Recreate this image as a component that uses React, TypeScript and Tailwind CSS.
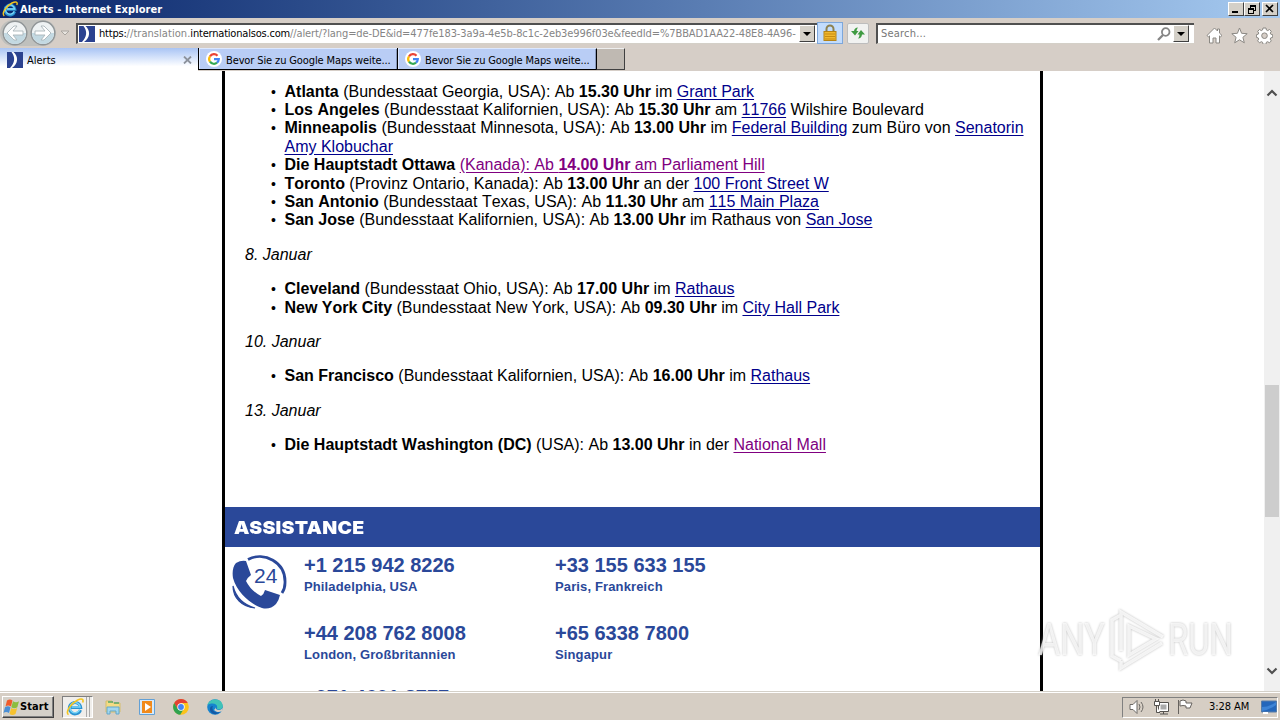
import type { ReactNode } from "react";

const tahoma = "font-['DejaVu_Sans_Condensed','DejaVu_Sans',sans-serif] font-stretch-condensed";
const raised = "border border-t-white border-l-white border-r-[#404040] border-b-[#404040] bg-[#d4d0c8]";

function IeIcon({ size = 16 }: { size?: number }) {
  return (
    <svg width={size} height={size} viewBox="0 0 16 16" fill="none" className="shrink-0">
      <path d="M12.8 10.6A5 5 0 1 1 13 8.4H4.5" stroke="#2b93d1" strokeWidth="2.8" />
      <path d="M12.3 10.3A4.6 4.6 0 1 1 12.6 8H5" stroke="#7bd6f8" strokeWidth="1.3" />
      <path d="M2.3 14.8C-1 13 4 5 10 2c4-2 6-1 4.8 2" stroke="#f4c61f" strokeWidth="1.4" />
    </svg>
  );
}

function SosIcon() {
  return (
    <svg width="16" height="16" viewBox="0 0 16 16" className="shrink-0">
      <rect width="16" height="16" fill="#2b4290" />
      <path d="M4.5 0H6.500c5 4.500 5 11.500-1.500 16H3C8 11 8.500 5 4.500 0Z" fill="#fff" />
    </svg>
  );
}

function GoogleIcon() {
  return (
    <svg width="16" height="16" viewBox="0 0 16 16" fill="none" className="shrink-0">
      <circle cx="8" cy="8" r="8" fill="#fff" />
      <g strokeWidth="2.2">
        <path d="M4 5.3A4.8 4.8 0 0 1 11.5 4.7" stroke="#ea4335" />
        <path d="M4 5.3a4.8 4.8 0 0 0 0 5.4" stroke="#fbbc05" />
        <path d="M4 10.7a4.8 4.8 0 0 0 7 1" stroke="#34a853" />
        <path d="M11 11.7A4.8 4.8 0 0 0 12.8 8.2H8" stroke="#4285f4" />
      </g>
    </svg>
  );
}

function NavButton({ flip }: { flip?: boolean }) {
  return (
    <svg width="26" height="26" viewBox="0 0 26 26" className={flip ? "-scale-x-100" : ""}>
      <circle cx="13" cy="13" r="11.8" fill="#eef2f3" stroke="#8f9496" strokeWidth="1.4" />
      <path d="M2 13a11 11 0 0 0 22 0Z" fill="#c3d9e2" />
      <path d="M5 13l7-7h3l-4 5h10v4H11l4 5h-3Z" fill="#fff" stroke="#aab5ba" strokeWidth="0.9" />
    </svg>
  );
}

function DropButton() {
  return (
    <div className={`flex h-[17px] w-4 items-center justify-center ${raised}`}>
      <svg width="8" height="4" viewBox="0 0 8 4">
        <path d="M0 0h8L4 4Z" />
      </svg>
    </div>
  );
}

function WindowButton({ children }: { children: ReactNode }) {
  return (
    <div className={`h-3.5 w-4 ${raised}`}>
      <svg width="14" height="12" viewBox="0 0 14 12" fill="none" stroke="#000" shapeRendering="crispEdges">
        {children}
      </svg>
    </div>
  );
}

function TitleBar() {
  return (
    <div className="flex h-[18px] items-center bg-linear-to-r from-[#0a246a] to-[#a6caf0] pr-0.5 pl-0.5">
      <IeIcon />
      <span className={`${tahoma} mt-0.5 ml-0.5 text-[11px] font-bold tracking-[0.08px] whitespace-nowrap text-white`}>
        Alerts - Internet Explorer
      </span>
      <div className="ml-auto flex">
        <WindowButton>
          <path d="M3 9h6" strokeWidth="2" />
        </WindowButton>
        <WindowButton>
          <path d="M5 2h6M5 3h6M10.5 3v4H9M5.5 2v3M3 5h6M3 6h6M3.5 5v5h5V5" />
        </WindowButton>
        <div className="w-0.5" />
        <WindowButton>
          <path d="M3 2l7 7M10 2L3 9" strokeWidth="1.7" shapeRendering="auto" />
        </WindowButton>
      </div>
    </div>
  );
}

function LockIcon() {
  return (
    <svg width="16" height="18" viewBox="0 0 16 18" fill="none">
      <path d="M4.5 8V5a3.5 3.5 0 0 1 7 0v3" stroke="#8d8150" strokeWidth="2" />
      <rect x="2" y="7.5" width="12" height="9" fill="#f0b82e" stroke="#b48317" />
      <path d="M3 10h10M3 12.5h10M3 15h10" stroke="#c78b12" />
    </svg>
  );
}

function AddressRow() {
  return (
    <div className="flex h-[30px] items-center">
      <div className="flex h-[26px] w-14 gap-0.5 rounded-full bg-[#bfc0bd] pl-0.5">
        <NavButton />
        <NavButton flip />
      </div>
      <svg width="10" height="6" viewBox="0 0 10 6" className="ml-1 shrink-0">
        <path d="M1 1h8L5 5Z" fill="#e8e5e0" stroke="#aaa6a0" />
      </svg>
      <div className="ml-1.5 flex h-[21px] w-[741px] items-center border-t-2 border-l-2 border-b border-t-[#505050] border-l-[#505050] border-b-[#d4d0c8] bg-white pr-0.5 pl-px">
        <SosIcon />
        <span className={`${tahoma} mt-0.5 ml-1 w-[699px] text-[11px] whitespace-nowrap text-[#858585]`}>
          <span className="tracking-[-0.2px] text-black">https:</span>
          <span className="tracking-[0.05px]">//translation.</span>
          <span className="tracking-[-0.2px] text-black">internationalsos.com</span>
          <span className="tracking-[-0.1px]">//alert/?lang=de-DE&amp;id=477fe183-3a9a-4e5b-8c1c-2eb3e996f03e&amp;feedId=%7BBAD1AA22-48E8-4A96-</span>
        </span>
        <div className="ml-auto"><DropButton /></div>
      </div>
      <div className="flex h-[22px] w-[26px] items-center justify-center border border-[#7da7db] bg-[#c2dcfd]">
        <LockIcon />
      </div>
      <div className="ml-1 flex h-[21px] w-[22px] items-center justify-center rounded-xs border border-[#bdbdbd] bg-[#f1f2f1]">
        <svg width="16" height="14" viewBox="0 0 16 14" fill="#3f9b42">
          <path d="M8 1.500Q4.500 1.500 4 5H1l4 4.500L8.500 5H6.500Q6.500 3 8 1.500Z" />
          <path d="M8 12.500q3.500 0 4-4h3L11 4 7.500 8.500h2q0 2.500-1.500 4Z" />
        </svg>
      </div>
      <div className="ml-[7px] flex h-[21px] w-[318px] items-center border-t-2 border-l-2 border-b border-t-[#505050] border-l-[#505050] border-b-[#d4d0c8] bg-white pr-[5px]">
        <span className={`${tahoma} mt-0.5 ml-[3px] text-[11px] tracking-[0.2px] text-[#777]`}>Search...</span>
        <svg width="14" height="14" viewBox="0 0 14 14" fill="none" stroke="#858585" strokeWidth="1.8" className="mr-0.5 ml-auto">
          <circle cx="8.7" cy="5" r="3.8" />
          <path d="M6 8l-5 5" strokeWidth="2.3" />
        </svg>
        <DropButton />
      </div>
      <div className="mt-1 ml-auto flex gap-2 pr-[7px]">
        <svg width="17" height="17" viewBox="0 0 17 17" fill="#fff" stroke="#8b8883">
          <path d="M8.5 1L1 8.5l1.5 1.3 1-.9V16H7v-5h3v5h3.5V8.9l1 .9L16 8.5l-2.500-2.400V2h-2v2Z" />
        </svg>
        <svg width="17" height="17" viewBox="0 0 17 17" fill="#fff" stroke="#8b8883">
          <path d="M8.5 1l2.1 5.3 5.6.4-4.3 3.6 1.4 5.5-4.8-3-4.8 3 1.4-5.5L.8 6.7l5.6-.4Z" />
        </svg>
        <svg width="17" height="17" viewBox="0 0 17 17" fill="#fff" stroke="#8b8883">
          <path d="M7 1h3l.4 2 1.3.6L13.5 2.5l1.8 1.8-1 1.8.5 1.1 1.9.5v2.7l-2 .5-.5 1.2 1.1 1.8-1.9 1.9-1.7-1.1-1.3.5-.4 2H7l-.5-2-1.2-.5-1.8 1.1-1.9-1.9 1.1-1.8-.5-1.2-1.8-.5V7.7l1.8-.5.5-1.1-1-1.8 1.8-1.8 1.8 1.1L6.5 3Z" />
          <circle cx="8.5" cy="8.7" r="2.8" fill="#d6cec7" />
        </svg>
      </div>
    </div>
  );
}

function Tabs() {
  return (
    <div className={`${tahoma} flex h-[23px] text-[11px] whitespace-nowrap`}>
      <div className="flex w-[198px] items-center bg-linear-to-b from-[#a9c4f4] to-white to-80% pr-1.5 pl-[7px]">
        <SosIcon />
        <span className="mt-[3px] ml-1">Alerts</span>
        <svg width="9" height="8" viewBox="0 0 9 8" className="ml-auto" stroke="#8c929c" strokeWidth="1.8">
          <path d="M1 .5l7 7M8 .5l-7 7" />
        </svg>
      </div>
      {[0, 1].map((n) => (
        <div key={n} className="flex h-[22px] w-[199px] items-center border-b border-l border-black bg-[#b9cdf5] pl-[7px] shadow-[inset_1px_1px_0_#dce8ff,inset_-1px_0_0_#8798ba]">
          <GoogleIcon />
          <span className="mt-[5px] ml-1 tracking-[-0.12px]">Bevor Sie zu Google Maps weite...</span>
        </div>
      ))}
      <div className="h-[22px] w-[29px] border border-t-[#eee] border-r-[#404040] border-b-[#404040] border-l-black bg-[#bfb9b2]" />
    </div>
  );
}

function A({ children, visited }: { children: ReactNode; visited?: boolean }) {
  return (
    <span className={`underline underline-offset-2 ${visited ? "text-[#800080]" : "text-[#00008b]"}`}>
      {children}
    </span>
  );
}

function Item({ children }: { children: ReactNode }) {
  return (
    <li className="flex">
      <span className="w-[13.5px] shrink-0 text-[14px]">•</span>
      <span>{children}</span>
    </li>
  );
}

function Events() {
  return (
    <div className="h-[436px] pt-[11.6px] pr-2 pl-5 text-[16px] leading-[18.4px] text-black [font-kerning:none]">
      <ul className="mb-4 pl-[26px]">
        <Item><b>Atlanta</b> (Bundesstaat Georgia, USA): Ab <b>15.30 Uhr</b> im <A>Grant Park</A></Item>
        <Item><b>Los Angeles</b> (Bundesstaat Kalifornien, USA): Ab <b>15.30 Uhr</b> am <A>11766</A> Wilshire Boulevard</Item>
        <Item><b>Minneapolis</b> (Bundesstaat Minnesota, USA): Ab <b>13.00 Uhr</b> im <A>Federal Building</A> zum Büro von <A>Senatorin<br />Amy Klobuchar</A></Item>
        <Item><b>Die Hauptstadt Ottawa</b> <A visited>(Kanada): Ab <b>14.00 Uhr</b> am Parliament Hill</A></Item>
        <Item><b>Toronto</b> (Provinz Ontario, Kanada): Ab <b>13.00 Uhr</b> an der <A>100 Front Street W</A></Item>
        <Item><b>San Antonio</b> (Bundesstaat Texas, USA): Ab <b>11.30 Uhr</b> am <A>115 Main Plaza</A></Item>
        <Item><b>San Jose</b> (Bundesstaat Kalifornien, USA): Ab <b>13.00 Uhr</b> im Rathaus von <A>San Jose</A></Item>
      </ul>
      <p className="mb-4 italic">8. Januar</p>
      <ul className="mb-4 pl-[26px]">
        <Item><b>Cleveland</b> (Bundesstaat Ohio, USA): Ab <b>17.00 Uhr</b> im <A>Rathaus</A></Item>
        <Item><b>New York City</b> (Bundesstaat New York, USA): Ab <b>09.30 Uhr</b> im <A>City Hall Park</A></Item>
      </ul>
      <p className="mb-4 italic">10. Januar</p>
      <ul className="mb-4 pl-[26px]">
        <Item><b>San Francisco</b> (Bundesstaat Kalifornien, USA): Ab <b>16.00 Uhr</b> im <A>Rathaus</A></Item>
      </ul>
      <p className="mb-4 italic">13. Januar</p>
      <ul className="pl-[26px]">
        <Item><b>Die Hauptstadt Washington (DC)</b> (USA): Ab <b>13.00 Uhr</b> in der <A visited>National Mall</A></Item>
      </ul>
    </div>
  );
}

const phones = [
  ["+1 215 942 8226", "Philadelphia, USA"],
  ["+33 155 633 155", "Paris, Frankreich"],
  ["+44 208 762 8008", "London, Großbritannien"],
  ["+65 6338 7800", "Singapur"],
  ["+971 4601 8777", ""],
];

function Assistance() {
  return (
    <>
      <h2 className="flex h-10 items-center bg-[#2a4899] pl-[9px] font-[Inter,sans-serif] text-[18px] font-black text-white">
        <span className="origin-left scale-x-[1.08] tracking-[0.25px]">ASSISTANCE</span>
      </h2>
      <div className="flex text-[#2a4899]">
        <svg width="56" height="56" viewBox="0 0 56 56" className="mt-[7px] ml-[7px] shrink-0" fill="none">
          <path d="M16 5.500C32-3 54 8 53 29c0 5-1 7-3 10" stroke="#2a4899" strokeWidth="2.800" />
          <path d="M4 9q5-3 10-2l5 14q-4 3-5 6 5 10 15 15 3-2 4-6l15 5q-1 5-4 9-6 6-14 4C20 51 5 39 1 24 0 18 1 12 4 9Z" fill="#2a4899" />
          <path d="M1 32c3 12 11 19 22 22C10 53 1 44 1 32Z" fill="#2a4899" stroke="#2a4899" strokeWidth="1.200" />
          <text x="22" y="29" fill="#2a4899" fontSize="21" fontFamily="Liberation Sans">24</text>
        </svg>
        <div className="ml-4 grid auto-rows-[64px] grid-cols-[251px_251px] grid-rows-[68px_64px] pt-[7px] font-bold">
          {phones.map(([number, city]) => (
            <div key={number}>
              <p className="text-[20px] leading-[23px] [font-kerning:none]">{number}</p>
              <p className="text-[13px] leading-5 tracking-[0.13px]">{city}</p>
            </div>
          ))}
        </div>
      </div>
    </>
  );
}

function ScrollBar() {
  return (
    <div className="flex w-4 flex-col items-center bg-[#f0f0f0]">
      <svg width="12" height="8" viewBox="0 0 12 8" fill="none" stroke="#505050" strokeWidth="2.2" className="mt-[18px]">
        <path d="M1.5 6.5L6 2l4.5 4.5" />
      </svg>
      <div className="mt-[288px] h-[132px] w-3.5 bg-[#cdcdcd]" />
      <svg width="12" height="8" viewBox="0 0 12 8" fill="none" stroke="#505050" strokeWidth="2.2" className="mt-auto mb-4">
        <path d="M1.5 1.5L6 6l4.5-4.5" />
      </svg>
    </div>
  );
}

function Watermark() {
  return (
    <div className="absolute top-[608px] left-[1038px] flex items-center gap-0.5 font-[Roboto,sans-serif] text-[45px] leading-[64px] text-white/75 [filter:drop-shadow(0_0_1px_#aaa)]">
      <span className="w-[66px]"><span className="inline-block origin-left scale-x-[0.76]">ANY</span></span>
      <svg width="60" height="64" viewBox="0 0 60 64" fill="none" stroke="#fff" strokeWidth="3.5" strokeOpacity="0.8">
        <path d="M15 53l-9-5V12l9-5M15 43V4l42 25M15 53v7l41-25M23 18v29l27-16Z" />
      </svg>
      <span className="w-[66px]"><span className="inline-block origin-left scale-x-[0.73]">RUN</span></span>
    </div>
  );
}

function TaskBar() {
  return (
    <div className={`${tahoma} flex h-[29px] items-center border-t border-[#d4d0c8] bg-[#d6cec4] pl-0.5 text-[11px] shadow-[inset_0_1px_0_#fff]`}>
      <div className={`mt-0.5 flex h-[22px] w-[52px] items-center shadow-[inset_-1px_-1px_0_#808080] ${raised}`}>
        <svg width="16" height="16" viewBox="0 0 16 16" className="shrink-0">
          <path d="M4 1.500q3-2 5.500 0L8 7.500q-3-2-5.500 0Z" fill="#ef5b2b" />
          <path d="M10 2.200q3 2 6 0L14.300 8.200q-3 2-6 0Z" fill="#8cbd3f" />
          <path d="M2 8.200q3-2 5.500 0L6 14q-3-2-5.500 0Z" fill="#4a8fd5" />
          <path d="M8.200 9q3 2 6 0L12.500 15q-3 2-6 0Z" fill="#f6c22e" />
        </svg>
        <span className="mt-px ml-px font-bold tracking-[0.1px]">Start</span>
      </div>
      <div className="mt-0.5 ml-2 flex h-[22px] w-[31px] items-center border border-[#808080] border-r-white border-b-white bg-[#f0eeeb] pl-[3px]">
        <IeIcon size={18} />
        <div className="ml-0.5 h-5 w-1 border-x border-[#aaa]" />
      </div>
      <div className="mt-0.5 ml-3 flex items-center gap-[18px]">
        <svg width="16" height="16" viewBox="0 0 16 16">
          <path d="M1 2h6l1 2h7v9H1Z" fill="#f4dc83" stroke="#d5bd6c" />
          <path d="M3 3h5M9 4h5" stroke="#59a66a" strokeWidth="1.500" />
          <path d="M2 8h12v7h-3v-3H5v3H2Z" fill="#a1d6ee" stroke="#63a7cb" />
        </svg>
        <svg width="16" height="16" viewBox="0 0 16 16">
          <path d="M.5.500h15v15H.500Z" fill="#d7eafa" stroke="#63a0d5" />
          <path d="M3 2h10v12H3Z" fill="#f18a1b" />
          <path d="M6 4l6 4-6 4Z" fill="#fff" />
        </svg>
        <svg width="16" height="16" viewBox="0 0 16 16">
          <circle cx="8" cy="8" r="7.800" fill="#fbc31b" />
          <path d="M1.200 4a7.800 7.800 0 0 1 13.600 0H8l-3.500 6Z" fill="#e34133" />
          <path d="M1.200 4a7.800 7.800 0 0 0 6 11.800l3.500-5.800-6 0Z" fill="#2fa24f" />
          <circle cx="8" cy="8" r="3.700" fill="#fff" />
          <circle cx="8" cy="8" r="2.900" fill="#4285f4" />
        </svg>
        <svg width="16" height="16" viewBox="0 0 16 16">
          <circle cx="8" cy="8" r="7.800" fill="#1683ce" />
          <path d="M.5 6C2-1 15-2 15.800 7c0 3-3 4-6 3 2-5-4-7-9.300-4Z" fill="#40c3b7" />
          <path d="M6 7c-2 3 1 8 7 6-4 4-10 2-10-3 0-2 1-3 3-3Z" fill="#1459a5" />
          <path d="M9 10c2 2 5 1 7-1l-1 3c-3 2-6 1-8-1 1-1 2-2 2-3Z" fill="#d6cec4" />
        </svg>
      </div>
      <div className="mt-0.5 mr-0.5 ml-auto flex h-[21px] w-[156px] items-center border border-t-[#808080] border-r-white border-b-white border-l-[#808080] pl-1.5">
        <svg width="16" height="16" viewBox="0 0 16 16" fill="#fff" stroke="#6d6a66">
          <path d="M1 5.500h3l4-4v13l-4-4H1Z" />
          <path d="M10 5q2 3 0 6M12 3q4 5 0 10" fill="none" />
        </svg>
        <svg width="16" height="16" viewBox="0 0 16 16" fill="#fff" stroke="#55524e" className="ml-2">
          <path d="M5.500 3.500h10v9h-10ZM7 15h8M10.500 12.500V15" />
          <path d="M7.500 5.500h6v5h-6Z" fill="#aaa" stroke="none" />
          <path d="M1.500 2.500h5v4h-5ZM2.500 0v2M5.500 0v2M3.500 6.500v7H7" />
        </svg>
        <svg width="16" height="16" viewBox="0 0 16 16" fill="#fff" stroke="#66625e" className="ml-2">
          <path d="M1.500 1v14M3 2q3-2 6 0v2h6l-2 5H9V7q-3-1-6 0Z" />
        </svg>
        <span className="mt-px ml-4 tracking-[-0.08px] whitespace-nowrap">3:28 AM</span>
        <svg width="16" height="14" viewBox="0 0 16 14" className="mr-0 ml-auto">
          <path d="M.5 1h15v11H.500Z" fill="#2467bb" stroke="#587da7" />
          <path d="M1 7q7 0 14-5v3Q8 10 1 11Z" fill="#3d84d6" />
          <path d="M2 13h5" stroke="#fff" strokeWidth="2" />
        </svg>
      </div>
    </div>
  );
}

export default function App() {
  return (
    <div className="relative flex h-[720px] w-[1280px] flex-col overflow-hidden bg-[#d6cec7] font-['Liberation_Sans',Arial,sans-serif] text-black">
      <TitleBar />
      <AddressRow />
      <Tabs />
      <div className="flex h-[620px] shrink-0 bg-white">
        <div className="flex-1 pl-[222px]">
          <div className="h-[620px] w-[821px] overflow-hidden border-x-3 border-black">
            <Events />
            <Assistance />
          </div>
        </div>
        <ScrollBar />
      </div>
      <TaskBar />
      <Watermark />
    </div>
  );
}
